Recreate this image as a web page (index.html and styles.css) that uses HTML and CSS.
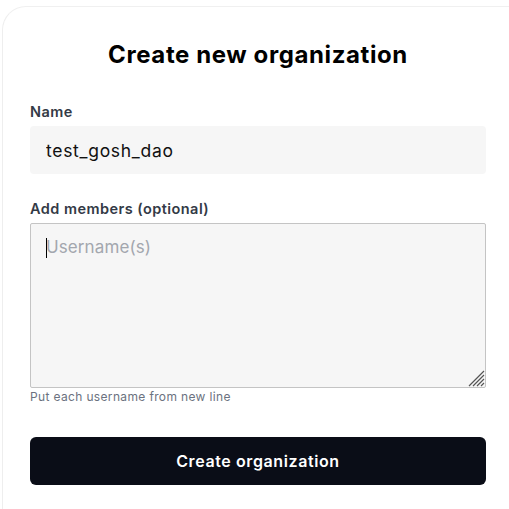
FILE: index.html
```html
<!DOCTYPE html>
<html>
<head>
<meta charset="utf-8">
<link rel="stylesheet" href="styles.css">
</head>
<body>
<div class="card">
  <h1 class="title">Create new organization</h1>
  <form class="form">
    <div class="field">
      <label class="label">Name</label>
      <input class="input" type="text" value="test_gosh_dao">
    </div>
    <div class="field field-members">
      <label class="label">Add members (optional)</label>
      <div class="area-wrap">
        <textarea class="textarea" placeholder="Username(s)"></textarea>
        <span class="caret"></span>
        <svg class="grip" width="20" height="20" viewBox="0 0 20 20">
          <path d="M19 4 L4 19 M19 8 L8 19 M19 12 L12 19 M19 16 L16 19" stroke="#555" stroke-width="1.2" fill="none"/>
        </svg>
      </div>
      <div class="hint">Put each username from new line</div>
    </div>
    <button class="button" type="button">Create organization</button>
  </form>
</div>
</body>
</html>
```
FILE: styles.css
```css
html, body {
  margin: 0;
  padding: 0;
  background: #ffffff;
}
body {
  font-family: "Inter", "Noto Sans", sans-serif;
  color: #000;
}
.card {
  margin: 6px 0 0 2px;
  height: 520px;
  border-top: 1px solid #f0f0f0;
  border-left: 1px solid #eeeeee;
  border-top-left-radius: 24px;
  box-sizing: border-box;
  padding: 0 23px 0 27px;
}
.title {
  margin: 0;
  padding-top: 33px;
  text-align: center;
  font-size: 24px;
  font-weight: 700;
  line-height: 30px;
  letter-spacing: 0.6px;
  color: #000;
}
.form {
  display: flex;
  flex-direction: column;
  margin-top: 32px;
}
.field {
  display: flex;
  flex-direction: column;
}
.label {
  font-size: 14.5px;
  font-weight: 600;
  line-height: 20px;
  letter-spacing: 0.45px;
  color: #333a46;
  margin-bottom: 4px;
}
.input {
  height: 48px;
  box-sizing: border-box;
  border: none;
  background: #f6f6f6;
  border-radius: 4px;
  padding: 0 16px;
  font-family: inherit;
  font-size: 17.5px;
  letter-spacing: 0.7px;
  color: #111;
  outline: none;
}
.field-members {
  margin-top: 25px;
}
.area-wrap {
  position: relative;
  display: flex;
}
.textarea {
  width: 100%;
  height: 165px;
  box-sizing: border-box;
  border: 1px solid #c4c4c4;
  border-radius: 2px;
  background: #f6f6f6;
  padding: 11px 15px;
  font-family: inherit;
  font-size: 17px;
  line-height: 24px;
  letter-spacing: 0.1px;
  color: #111;
  outline: none;
  resize: none;
}
.textarea::placeholder {
  color: #a3a7ae;
}
.caret {
  position: absolute;
  left: 16px;
  top: 15px;
  width: 1px;
  height: 20px;
  background: #000;
}
.grip {
  position: absolute;
  right: 1px;
  bottom: 1px;
}
.hint {
  margin-top: 1px;
  font-size: 12px;
  line-height: 16px;
  letter-spacing: 0.35px;
  color: #6b7280;
}
.button {
  margin-top: 32px;
  height: 48px;
  border: none;
  border-radius: 6px;
  background: #0a0d17;
  color: #fff;
  font-family: inherit;
  font-size: 16px;
  font-weight: 600;
  letter-spacing: 0.6px;
  cursor: pointer;
}
```
